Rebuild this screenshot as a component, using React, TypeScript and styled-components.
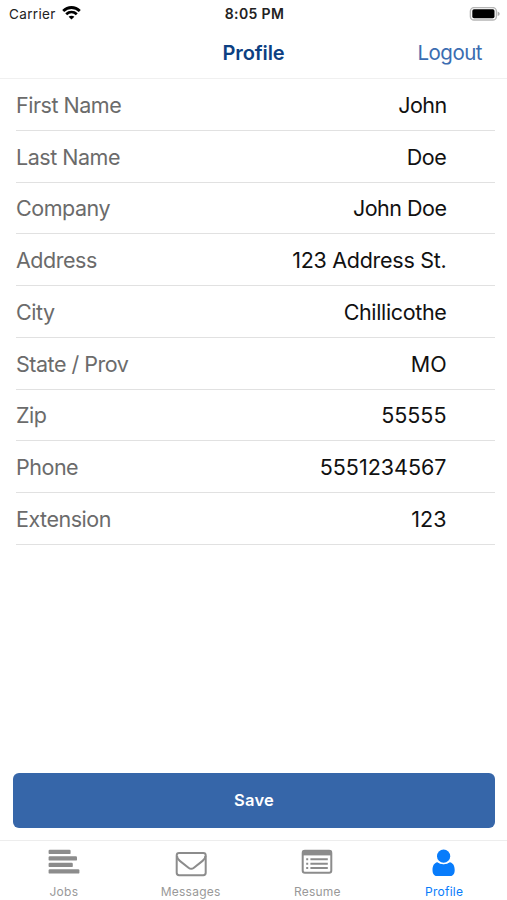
import React from "react";
import styled, { createGlobalStyle } from "styled-components";

const GlobalStyle = createGlobalStyle`
  * { box-sizing: border-box; }
  body { margin: 0; background: #fff; font-family: Inter, "Liberation Sans", sans-serif; }
`;

const Screen = styled.main`
  display: flex;
  flex-direction: column;
  width: 100%;
  height: 900px;
  background: #fff;
  overflow: hidden;
`;

const StatusBar = styled.div`
  display: grid;
  grid-template-columns: 1fr auto 1fr;
  align-items: center;
  height: 27px;
  padding: 0 7px 0 9px;
  color: #222;
`;

const Carrier = styled.div`
  display: flex;
  align-items: center;
  gap: 6px;
  font-size: 13.5px;
  letter-spacing: 0.35px;
`;

const Clock = styled.div`
  font-size: 14px;
  font-weight: 600;
  letter-spacing: 0.35px;
`;

const BatterySlot = styled.div`
  display: flex;
  justify-content: flex-end;
`;

const NavBar = styled.header`
  display: grid;
  grid-template-columns: 1fr auto 1fr;
  align-items: center;
  height: 52px;
  padding: 0 25px;
  border-bottom: 1px solid #f0f0f0;
`;

const Title = styled.h1`
  grid-column: 2;
  margin: 0;
  font-size: 20px;
  font-weight: 600;
  letter-spacing: -0.1px;
  color: #0c4082;
`;

const Logout = styled.button`
  justify-self: end;
  padding: 0;
  border: 0;
  background: none;
  font: 400 20.5px Inter, sans-serif;
  letter-spacing: -0.5px;
  color: #3b6db1;
`;

const Fields = styled.dl`
  flex: 1;
  margin: 0;
  padding: 0 12.5px 0 16px;
`;

const Field = styled.div`
  display: flex;
  justify-content: space-between;
  align-items: center;
  height: 51.75px;
  padding: 1px 48px 0 0;
  border-bottom: 1px solid #e1e1e1;
  font-size: 21.5px;
`;

const Label = styled.dt`
  color: #6b6b6b;
  letter-spacing: -0.48px;
`;

const Value = styled.dd<{ $spacing?: number }>`
  margin: 0;
  color: #111;
  letter-spacing: ${(p) => p.$spacing ?? -0.4}px;
`;

const SaveButton = styled.button`
  height: 55px;
  margin: 0 12px 12px 13px;
  padding: 0 0 2px;
  border: 0;
  border-radius: 6px;
  background: #3666a9;
  color: #fff;
  font: 600 16.5px Inter, sans-serif;
  letter-spacing: 0.25px;
`;

const TabBar = styled.nav`
  display: grid;
  grid-template-columns: repeat(4, 1fr);
  height: 60px;
  border-top: 1px solid #ededed;
`;

const Tab = styled.a<{ $active?: boolean }>`
  display: flex;
  flex-direction: column;
  align-items: center;
  padding: 7px 0 0 1px;
  color: ${(p) => (p.$active ? "#087cfb" : "#8c8c8c")};
`;

const TabLabel = styled.span<{ $active?: boolean }>`
  margin-top: 6px;
  font-size: 12px;
  line-height: 16px;
  letter-spacing: 0.25px;
  color: ${(p) => (p.$active ? "#087cfb" : "#999")};
`;

const WifiIcon = () => (
  <svg width="19" height="15" viewBox="0 0 19 15" fill="none" stroke="#000" strokeWidth="2.8">
    <path d="M1.2 5C6 .3 13 .3 17.8 5" />
    <path d="M4.2 8.3c3.1-2.8 7.5-2.8 10.6 0" />
    <path d="M9.5 13.6 6.6 10.8c1.6-1.4 4.2-1.4 5.8 0z" fill="#000" stroke="none" />
  </svg>
);

const BatteryIcon = () => (
  <svg width="31" height="14" viewBox="0 0 31 14">
    <rect x="1.4" y=".6" width="26" height="12.4" rx="3.6" fill="#fff" stroke="#b5b5b5" strokeWidth="1.4" />
    <rect x="3.3" y="2.3" width="22.2" height="9" rx="1.7" fill="#000" />
    <path d="M28.7 4.5q2 .7 2 2.3t-2 2.3z" fill="#aaa" />
  </svg>
);

const JobsIcon = () => (
  <svg width="32" height="30" viewBox="0 0 32 30" fill="currentColor">
    <rect x=".6" y="1.7" width="22" height="4.4" rx="1.2" />
    <rect x=".6" y="8.2" width="28.4" height="4.4" rx="1.2" />
    <rect x=".6" y="14.7" width="24.2" height="4.4" rx="1.2" />
    <rect x=".6" y="21.2" width="30.8" height="4.4" rx="1.2" />
  </svg>
);

const MessagesIcon = () => (
  <svg width="32" height="30" viewBox="0 0 32 30" fill="none" stroke="currentColor" strokeWidth="2">
    <rect x="1.7" y="5" width="29" height="22.2" rx="2.4" />
    <path d="M2 8c0 2.1 1.1 3.6 2.8 4.9l8.7 6.8q2.7 2.2 5.4 0l8.7-6.8c1.7-1.3 2.8-2.8 2.8-4.9" />
  </svg>
);

const ResumeIcon = () => (
  <svg width="32" height="30" viewBox="0 0 32 30" fill="none" stroke="currentColor" strokeWidth="2">
    <rect x="1.7" y="2.8" width="28.6" height="22" rx="2.2" />
    <path d="M1.7 4.9h28.6" strokeWidth="5" />
    <path d="M5.2 11.3h2M5.2 15.7h2M5.2 20.1h2M9.4 11.3h17.4M9.4 15.7h17.4M9.4 20.1h17.4" />
  </svg>
);

const ProfileIcon = () => (
  <svg width="32" height="30" viewBox="0 0 32 30" fill="currentColor">
    <circle cx="15.6" cy="8.2" r="6.6" />
    <path d="M9.4 14.2c-3.4.5-4.9 3.9-4.9 7.8 0 3.6 1.6 6 4.2 6h13.8c2.6 0 4.2-2.4 4.2-6 0-3.9-1.5-7.3-4.9-7.8-3.6 2.6-8.8 2.6-12.4 0z" />
    <path d="M9.4 13.5c3.5 2.9 8.9 2.9 12.4 0" fill="none" stroke="#fff" strokeWidth=".6" />
  </svg>
);

const fields = [
  { label: "First Name", value: "John", spacing: -0.6 },
  { label: "Last Name", value: "Doe" },
  { label: "Company", value: "John Doe", spacing: -0.5 },
  { label: "Address", value: "123 Address St.", spacing: -0.27 },
  { label: "City", value: "Chillicothe", spacing: -0.35 },
  { label: "State / Prov", value: "MO", spacing: -0.1 },
  { label: "Zip", value: "55555", spacing: 0 },
  { label: "Phone", value: "5551234567", spacing: 0 },
  { label: "Extension", value: "123", spacing: 0 },
];

const tabs = [
  { label: "Jobs", Icon: JobsIcon },
  { label: "Messages", Icon: MessagesIcon },
  { label: "Resume", Icon: ResumeIcon },
  { label: "Profile", Icon: ProfileIcon, active: true },
];

export default function App() {
  return (
    <>
      <GlobalStyle />
      <Screen>
        <StatusBar>
          <Carrier>Carrier<WifiIcon /></Carrier>
          <Clock>8:05 PM</Clock>
          <BatterySlot><BatteryIcon /></BatterySlot>
        </StatusBar>
        <NavBar>
          <Title>Profile</Title>
          <Logout>Logout</Logout>
        </NavBar>
        <Fields>
          {fields.map((f) => (
            <Field key={f.label}>
              <Label>{f.label}</Label>
              <Value $spacing={f.spacing}>{f.value}</Value>
            </Field>
          ))}
        </Fields>
        <SaveButton>Save</SaveButton>
        <TabBar>
          {tabs.map(({ label, Icon, active }) => (
            <Tab key={label} $active={active}>
              <Icon />
              <TabLabel $active={active}>{label}</TabLabel>
            </Tab>
          ))}
        </TabBar>
      </Screen>
    </>
  );
}
